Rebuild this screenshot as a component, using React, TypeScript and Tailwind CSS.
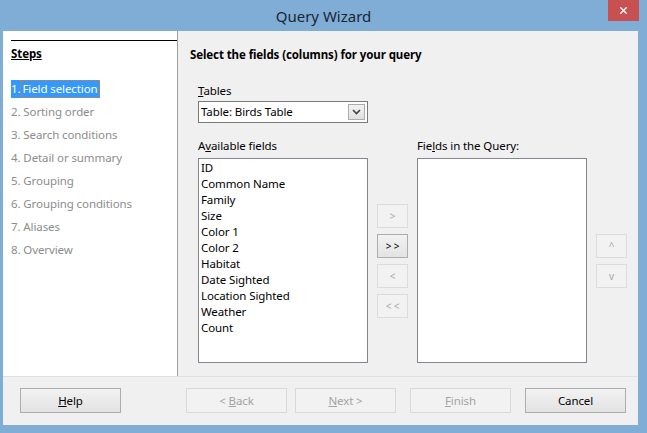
import { X } from "lucide-react";

const steps = [
  "2. Sorting order",
  "3. Search conditions",
  "4. Detail or summary",
  "5. Grouping",
  "6. Grouping conditions",
  "7. Aliases",
  "8. Overview",
];

const fields = [
  "ID",
  "Common Name",
  "Family",
  "Size",
  "Color 1",
  "Color 2",
  "Habitat",
  "Date Sighted",
  "Location Sighted",
  "Weather",
  "Count",
];

const font = { fontFamily: '"Noto Sans", "Open Sans", sans-serif' };

function SmallButton({ label, enabled }: { label: string; enabled?: boolean }) {
  return (
    <div
      className={`w-[31px] h-[24px] flex items-center justify-center text-[10px] border ${
        enabled
          ? "border-[#adadad] bg-gradient-to-b from-[#f2f2f2] to-[#e3e3e3] text-black"
          : "border-[#dcdcdc] bg-[#f2f2f2] text-[#a8a8a8]"
      }`}
    >
      {label}
    </div>
  );
}

function DialogButton({
  children,
  enabled,
}: {
  children: React.ReactNode;
  enabled?: boolean;
}) {
  return (
    <div
      className={`w-[101px] h-[25px] flex items-center justify-center text-[11.5px] tracking-[-0.1px] border ${
        enabled
          ? "border-[#adadad] bg-gradient-to-b from-[#f2f2f2] to-[#e3e3e3] text-black"
          : "border-[#d9d9d9] bg-[#f2f2f2] text-[#a3a3a3]"
      }`}
    >
      {children}
    </div>
  );
}

export default function App() {
  return (
    <div
      className="w-[647px] h-[433px] bg-[#7fadd6] flex flex-col overflow-hidden"
      style={font}
    >
      {/* Title bar */}
      <div className="relative h-[31px] flex items-center justify-center">
        <span className="text-[15px] text-[#1b2633] mt-[1px]">Query Wizard</span>
        <div className="absolute right-[8px] top-0 w-[31px] h-[21px] bg-[#c75050] flex items-center justify-center">
          <X className="w-[11px] h-[11px] text-white" strokeWidth={3} />
        </div>
      </div>

      {/* Body */}
      <div className="flex-1 ml-[3px] mr-[9px] mb-[8px] bg-[#f0f0f0] flex flex-col text-[11.5px] tracking-[-0.1px]">
        <div className="h-[345px] flex">
          {/* Steps panel */}
          <div className="w-[175px] bg-white border-r border-[#a0a0a0] pt-[9px]">
            <div className="ml-[8px] border-t border-black pt-[5px] leading-[16px]">
              <span className="font-bold underline text-black">Steps</span>
            </div>
            <div className="ml-[8px] mt-[18px] flex flex-col gap-[5px] leading-[18px]">
              <div className="flex">
                <span className="bg-[#3399ff] text-white flex">
                  <span>1.</span>
                  <span className="border border-dotted border-[#e07b1f] px-[1px] leading-[16px]">
                    Field selection
                  </span>
                </span>
              </div>
              {steps.map((s) => (
                <div key={s} className="text-[#8c8c8c]">
                  {s}
                </div>
              ))}
            </div>
          </div>

          {/* Main panel */}
          <div className="flex-1 pl-[12px] pt-[15px]">
            <div className="font-bold text-black leading-[18px]">
              Select the fields (columns) for your query
            </div>
            <div className="ml-[8px] mt-[19px] text-black leading-[16px]">
              <span className="underline">T</span>ables
            </div>
            <div className="ml-[8px] mt-[2px] w-[170px] h-[22px] bg-white border border-[#7a7a7a] flex items-center justify-between pl-[2px] pr-[2px]">
              <span className="text-black">Table: Birds Table</span>
              <div className="w-[17px] h-[16px] border border-[#acacac] bg-gradient-to-b from-[#f2f2f2] to-[#e0e0e0] flex items-center justify-center">
                <svg width="9" height="6" viewBox="0 0 9 6">
                  <path d="M1 1 L4.5 4.5 L8 1" fill="none" stroke="#404040" strokeWidth="1.6" />
                </svg>
              </div>
            </div>

            <div className="ml-[8px] mt-[15px] grid grid-cols-[170px_31px_170px_31px] gap-x-[9px] gap-y-[4px]">
              <div className="text-black leading-[16px]">
                A<span className="underline">v</span>ailable fields
              </div>
              <div />
              <div className="text-black leading-[16px]">
                Fie<span className="underline">l</span>ds in the Query:
              </div>
              <div />

              <div className="h-[205px] bg-white border border-[#828790] pl-[2px] pt-[1px]">
                {fields.map((f) => (
                  <div key={f} className="text-black leading-[16px]">
                    {f}
                  </div>
                ))}
              </div>
              <div className="pt-[46px] flex flex-col gap-[6px]">
                <SmallButton label=">" />
                <SmallButton label="> >" enabled />
                <SmallButton label="<" />
                <SmallButton label="< <" />
              </div>
              <div className="h-[205px] bg-white border border-[#828790]" />
              <div className="pt-[76px] flex flex-col gap-[6px]">
                <SmallButton label="^" />
                <SmallButton label="v" />
              </div>
            </div>
          </div>
        </div>

        {/* Bottom bar */}
        <div className="flex-1 border-t border-[#dfdfdf] flex items-start pt-[11px] pl-[17px]">
          <DialogButton enabled>
            <span className="underline">H</span>elp
          </DialogButton>
          <div className="ml-[65px] flex gap-[8px]">
            <DialogButton>
              &lt;&nbsp;<span className="underline">B</span>ack
            </DialogButton>
            <DialogButton>
              <span className="underline">N</span>ext&nbsp;&gt;
            </DialogButton>
          </div>
          <div className="ml-[14px] flex gap-[14px]">
            <DialogButton>
              <span className="underline">F</span>inish
            </DialogButton>
            <DialogButton enabled>Cancel</DialogButton>
          </div>
        </div>
      </div>
    </div>
  );
}
